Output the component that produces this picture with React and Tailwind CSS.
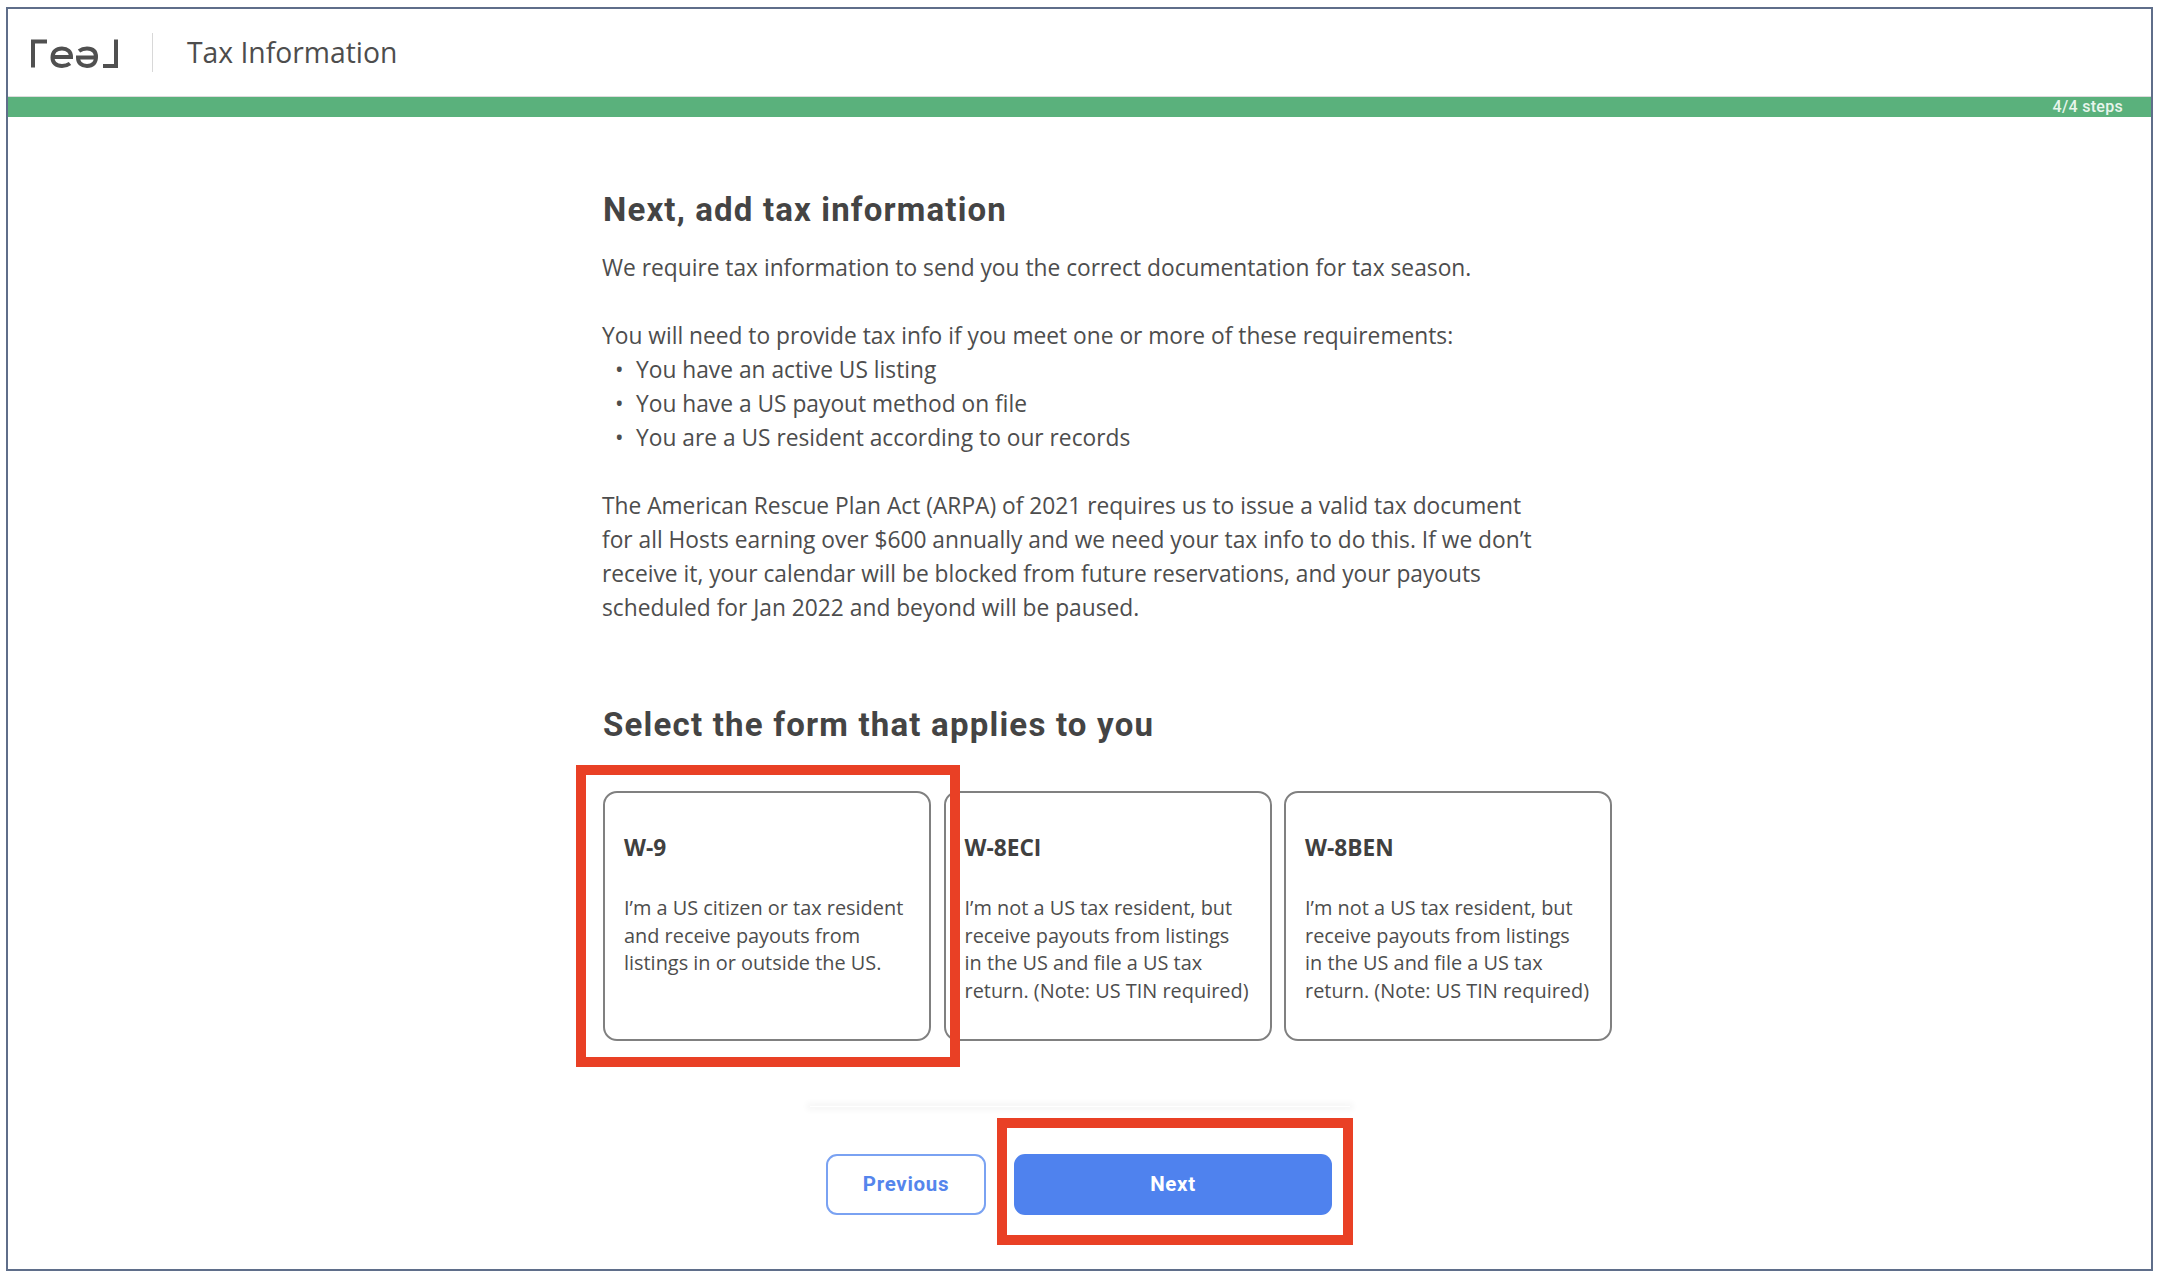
export default function App() {
  const body = "font-['Open_Sans',sans-serif] text-[#4d4d4d]";
  const cards = [
    { t: "W-9", l: ["I’m a US citizen or tax resident", "and receive payouts from", "listings in or outside the US."] },
    { t: "W-8ECI", l: ["I’m not a US tax resident, but", "receive payouts from listings", "in the US and file a US tax", "return. (Note: US TIN required)"] },
    { t: "W-8BEN", l: ["I’m not a US tax resident, but", "receive payouts from listings", "in the US and file a US tax", "return. (Note: US TIN required)"] },
  ];
  return (
    <div className="relative w-[2162px] h-[1278px] bg-white overflow-hidden pt-[7px] pl-[6px] pr-[9px] pb-[7px]">
      <div className="h-[1264px] border-2 border-[#5f6e8a] bg-white flex flex-col">
        <header className="h-[87px] shrink-0 flex items-center pl-[22px]">
          <svg width="90" height="32" viewBox="0 0 90 32" fill="none" stroke="#505050" strokeWidth="4" className="shrink-0">
            <path d="M3 30.5V4.5H17" />
            <path d="M22.5 20H41C41 14.5 37.5 11.5 32 11.5C26 11.5 22.5 15 22.5 20.5C22.5 26 26 29 32 29C35 29 38 28 40 26.5" />
            <path d="M66 20.5H48C48 26 51.5 29 57 29C63 29 66 25.5 66 20C66 14.5 63 11.5 57 11.5C54 11.5 51 12.5 49 14" />
            <path d="M86 2.5V29H73" />
          </svg>
          <div className="w-px h-[39px] bg-[#d8d8d8] ml-[32px] mr-[34px]" />
          <span className={`${body} text-[28.3px] leading-none`}>Tax Information</span>
        </header>
        <div className="h-[21px] shrink-0 bg-[#5ab17c] border-t border-[#dcdcdc] flex items-center justify-end pr-[28px]">
          <span className="font-['Roboto',sans-serif] font-medium text-[16px] leading-none tracking-[0.3px] text-[#e8f5ec]">4/4 steps</span>
        </div>
        <main className="flex-1 pl-[595px] flex flex-col">
          <h1 className="mt-[72px] font-['Roboto',sans-serif] font-bold text-[33px] leading-[42px] tracking-[1.15px] text-[#444444]">Next, add tax information</h1>
          <div className={`${body} mt-[19.5px] text-[22.75px] leading-[34px] -ml-[1px]`}>
            <p>We require tax information to send you the correct documentation for tax season.</p>
            <p className="mt-[34px]">You will need to provide tax info if you meet one or more of these requirements:</p>
            <ul>
              {["You have an active US listing", "You have a US payout method on file", "You are a US resident according to our records"].map((x) => (
                <li key={x} className="flex pl-[13px]">
                  <span className="w-[21px]">•</span>
                  <span>{x}</span>
                </li>
              ))}
            </ul>
            <p className="mt-[34px]">
              The American Rescue Plan Act (ARPA) of 2021 requires us to issue a valid tax document<br />
              for all Hosts earning over $600 annually and we need your tax info to do this. If we don’t<br />
              receive it, your calendar will be blocked from future reservations, and your payouts<br />
              scheduled for Jan 2022 and beyond will be paused.
            </p>
          </div>
          <h2 className="mt-[79.5px] font-['Roboto',sans-serif] font-bold text-[33px] leading-[42px] tracking-[1.2px] text-[#444444]">Select the form that applies to you</h2>
          <div className="mt-[45px] flex gap-[12.5px]">
            {cards.map((c) => (
              <div key={c.t} className="w-[328px] h-[250px] rounded-[14px] border-2 border-[#808080] pl-[19px] pt-[40px]">
                <div className={`${body} font-bold text-[22.7px] leading-[30px] text-[#404040]`}>{c.t}</div>
                <div className={`${body} mt-[31px] text-[19.9px] leading-[27.7px] whitespace-nowrap`}>
                  {c.l.map((x) => <div key={x}>{x}</div>)}
                </div>
              </div>
            ))}
          </div>
          <div className="mt-[65px] ml-[207px] w-[540px] h-[1px] shadow-[0_0_6px_3px_#f5f5f5]" />
          <div className="mt-[47px] ml-[223px] flex gap-[28px]">
            <button className="w-[160px] h-[61px] rounded-[11px] border-2 border-[#7aa2f2] bg-white font-['Roboto',sans-serif] font-bold text-[20.5px] tracking-[0.7px] text-[#5585ec]">Previous</button>
            <button className="w-[318px] h-[61px] rounded-[11px] bg-[#4f82ee] font-['Roboto',sans-serif] font-bold text-[20.5px] tracking-[0.7px] text-white">Next</button>
          </div>
        </main>
      </div>
      <div className="absolute left-[576px] top-[765px] w-[384px] h-[302px] border-[10px] border-[#e94025]" />
      <div className="absolute left-[997px] top-[1118px] w-[356px] h-[127px] border-[10px] border-[#e94025]" />
    </div>
  );
}
